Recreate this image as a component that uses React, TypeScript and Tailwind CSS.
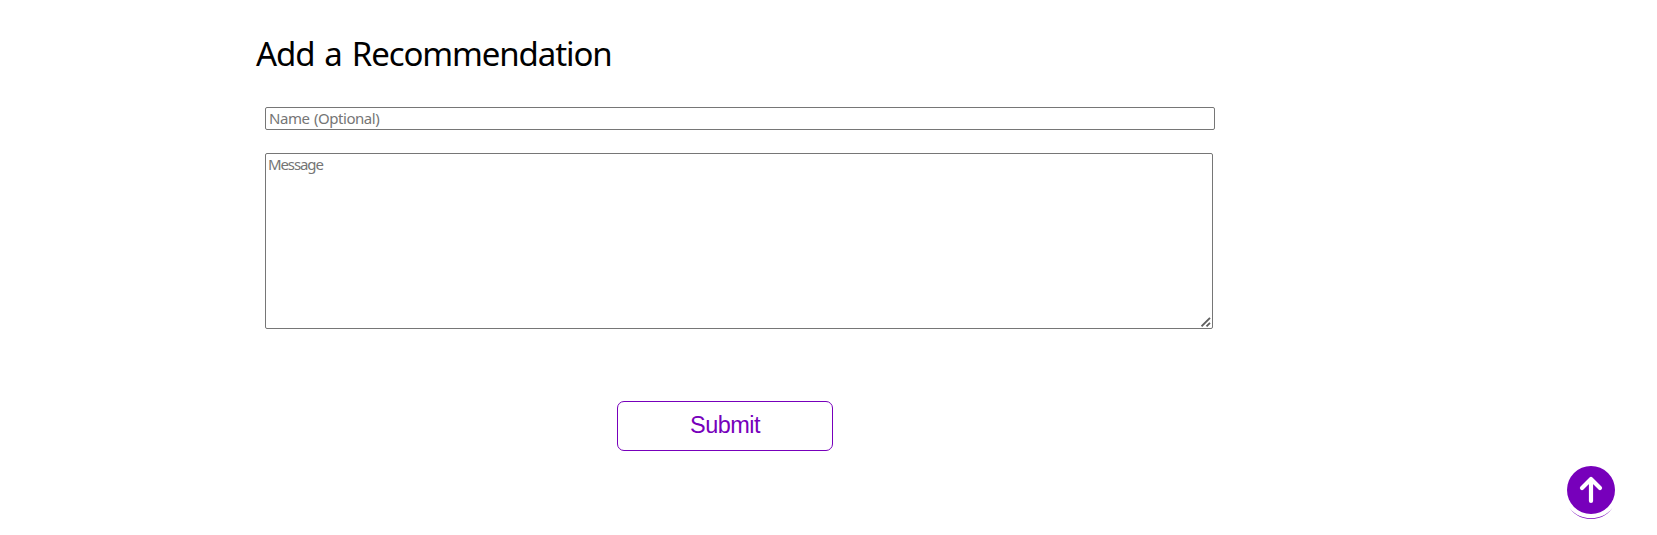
export default function App() {
  return (
    <main className="flex h-[535px] w-full flex-col bg-white pl-[256px] font-['Noto_Sans',sans-serif] text-black">
      <h1 className="mt-[31px] h-[46px] text-[33px] leading-[46px] font-normal whitespace-nowrap tracking-[-1.1px] [word-spacing:2.5px]">
        Add a Recommendation
      </h1>
      <form className="ml-[9px] flex flex-col items-start" onSubmit={(e) => e.preventDefault()}>
        <input
          type="text"
          aria-label="Name"
          placeholder="Name (Optional)"
          className="mt-[30px] h-[23px] w-[950px] rounded-[2px] border border-[#767676] bg-white px-[3px] pt-0 pb-[2px] text-[15px] leading-[19px] tracking-[-0.45px] [word-spacing:1px] placeholder:text-[#757575]"
        />
        <div className="relative mt-[23px] h-[176px] w-[948px]">
          <textarea
            aria-label="Message"
            placeholder="Message"
            className="block h-full w-full resize-none rounded-[2px] border border-[#767676] bg-white px-[2px] py-0 text-[15px] leading-[20px] tracking-[-1.1px] placeholder:text-[#757575]"
          />
          <svg
            className="pointer-events-none absolute right-[2px] bottom-[2px]"
            width="10"
            height="10"
            viewBox="0 0 10 10"
            stroke="#606060"
            strokeWidth="1.9"
          >
            <path d="M0.5 9.3L9 0.8M5.5 9.3L9 5.8" />
          </svg>
        </div>
        <button
          type="submit"
          className="mt-[72px] ml-[352px] h-[50px] w-[216px] rounded-[7px] border border-[#7700bb] bg-white pb-[2px] font-['Liberation_Sans',sans-serif] text-[23.5px] leading-[27px] tracking-[-0.55px] text-[#7700bb]"
        >
          Submit
        </button>
      </form>
      <button type="button" aria-label="Back to top" className="fixed top-[466px] left-[1567px] h-[54px] w-[48px]">
        <svg width="48" height="54" viewBox="0 0 48 54" fill="none">
          <path d="M0.5 38.5C5 47.5 14 52.2 24 52.2S43 47.5 47.5 38.5C43 48 34 53 24 53S5 48 0.5 38.5Z" fill="#7700bb" />
          <circle cx="24" cy="24" r="24" fill="#7700bb" />
          <path d="M24 35V13M15 22L24 13L33 22" stroke="white" strokeWidth="4.2" strokeLinecap="round" strokeLinejoin="round" />
        </svg>
      </button>
    </main>
  );
}
